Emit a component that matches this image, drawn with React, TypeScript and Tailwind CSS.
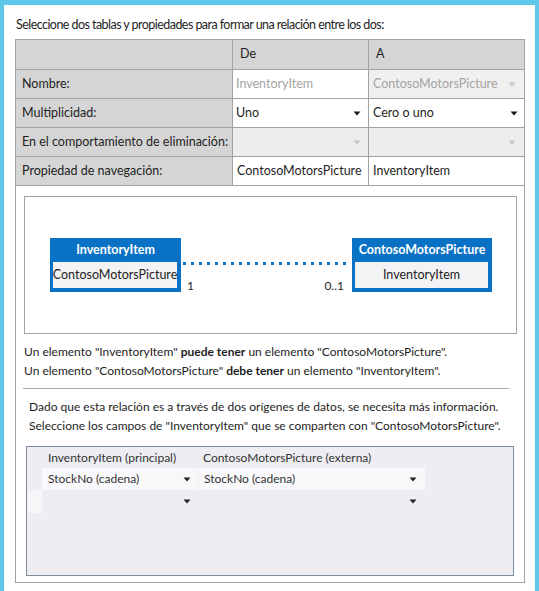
import React from "react";

const Arrow = ({ c = "#1a1a1a" }: { c?: string }) => (
  <svg width="8" height="5" viewBox="0 0 8 5" className="shrink-0">
    <path d="M0.5 0.5H7.5L4 4.5Z" fill={c} />
  </svg>
);

const Box = ({ title, field, w }: { title: string; field: string; w: string }) => (
  <div className={`${w} h-[54px] bg-[#0a72c4] flex flex-col shrink-0`}>
    <div className="h-[24px] flex items-center justify-center text-white font-bold leading-none text-[12.5px]">{title}</div>
    <div className="mx-[3px] mr-[4px] h-[26px] bg-[#f3f3f6] flex items-center justify-center text-[#222] leading-none text-[12.5px]">{field}</div>
  </div>
);

export default function App() {
  return (
    <div className="w-[539px] h-[591px] bg-[#5fc7ea] pt-[5px] px-[4px] font-['Lato',sans-serif] text-[12px] text-[#1e1e1e] overflow-hidden">
      <div className="h-full bg-white pl-[11px] pr-[10px] pt-[10px]">
        <div className="h-[24px] leading-[18px] pl-[1px] pt-[1px] text-[12.5px] tracking-[-0.55px]">
          Seleccione dos tablas y propiedades para formar una relación entre los dos:
        </div>
        <div className="border border-[#a3a3a3] h-[544px] flex flex-col">
          {/* table */}
          <div className="grid grid-cols-[217px_136px_1fr] text-[12.5px]">
            <div className="h-[30px] bg-[#d5d5d5] border-r border-b border-[#a3a3a3]" />
            <div className="h-[30px] bg-[#d5d5d5] border-r border-b border-[#a3a3a3] flex items-center pl-[7px]">De</div>
            <div className="h-[30px] bg-[#d5d5d5] border-b border-[#a3a3a3] flex items-center pl-[7px]">A</div>

            <div className="h-[29px] bg-[#d5d5d5] border-r border-b border-[#a3a3a3] flex items-center pl-[6px]">Nombre:</div>
            <div className="h-[29px] bg-white border-r border-b border-[#a3a3a3] flex items-center pl-[3px] text-[#a3a3a3]">InventoryItem</div>
            <div className="h-[29px] bg-[#f0f0f0] border-b border-[#a3a3a3] flex items-center justify-between pl-[4px] pr-[8px] text-[#a3a3a3]">
              <span>ContosoMotorsPicture</span>
              <Arrow c="#c4c4c4" />
            </div>

            <div className="h-[29px] bg-[#d5d5d5] border-r border-b border-[#a3a3a3] flex items-center pl-[6px]">Multiplicidad:</div>
            <div className="h-[29px] bg-white border-r border-b border-[#a3a3a3] flex items-center justify-between pl-[3px] pr-[7px]">
              <span>Uno</span>
              <Arrow />
            </div>
            <div className="h-[29px] bg-white border-b border-[#a3a3a3] flex items-center justify-between pl-[4px] pr-[6px]">
              <span>Cero o uno</span>
              <Arrow />
            </div>

            <div className="h-[29px] bg-[#d5d5d5] border-r border-b border-[#a3a3a3] flex items-center pl-[6px] whitespace-nowrap">En el comportamiento de eliminación:</div>
            <div className="h-[29px] bg-[#ededed] border-r border-b border-[#a3a3a3] flex items-center justify-end pr-[7px]">
              <Arrow c="#c4c4c4" />
            </div>
            <div className="h-[29px] bg-[#ededed] border-b border-[#a3a3a3] flex items-center justify-end pr-[8px]">
              <Arrow c="#c4c4c4" />
            </div>

            <div className="h-[29px] bg-[#d5d5d5] border-r border-b border-[#a3a3a3] flex items-center pl-[6px]">Propiedad de navegación:</div>
            <div className="h-[29px] bg-white border-r border-b border-[#a3a3a3] flex items-center pl-[4px]">ContosoMotorsPicture</div>
            <div className="h-[29px] bg-white border-b border-[#a3a3a3] flex items-center pl-[4px]">InventoryItem</div>
          </div>

          {/* diagram */}
          <div className="ml-[8px] mr-[7px] mt-[10px] h-[138px] border border-[#a3a3a3] pt-[41px] pl-[25px] pr-[24px] flex">
            <Box title="InventoryItem" field="ContosoMotorsPicture" w="w-[131px]" />
            <div className="relative flex-1 h-[54px]">
              <svg className="absolute left-0 top-[24px]" width="170" height="3">
                <line x1="2" y1="1.5" x2="170" y2="1.5" stroke="#0a72c4" strokeWidth="3" strokeDasharray="3 5" />
              </svg>
              <span className="absolute left-[6px] top-[40px] leading-[16px]">1</span>
              <span className="absolute right-[8px] top-[40px] leading-[16px]">0..1</span>
            </div>
            <Box title="ContosoMotorsPicture" field="InventoryItem" w="w-[140px]" />
          </div>

          {/* sentences */}
          <div className="ml-[8px] mt-[8px] leading-[19px]">
            <div>
              Un elemento "InventoryItem" <b className="font-bold">puede tener</b> un elemento "ContosoMotorsPicture".
            </div>
            <div>
              Un elemento "ContosoMotorsPicture" <b className="font-bold">debe tener</b> un elemento "InventoryItem".
            </div>
          </div>

          <div className="ml-[7px] w-[486px] h-px bg-[#a8a8a8] mt-[8px]" />

          <div className="ml-[13px] mt-[8px] leading-[19px] whitespace-nowrap">
            <div>Dado que esta relación es a través de dos orígenes de datos, se necesita más información.</div>
            <div>Seleccione los campos de "InventoryItem" que se comparten con "ContosoMotorsPicture".</div>
          </div>

          {/* grid */}
          <div className="ml-[10px] mt-[11px] w-[488px] h-[130px] border border-[#7d8c9c] bg-[#ededf2] text-[#333]">
            <div className="grid grid-cols-[15px_156px_229px_1fr]">
              <div className="h-[21px]" />
              <div className="h-[21px] flex items-center pl-[6px]">InventoryItem (principal)</div>
              <div className="h-[21px] flex items-center pl-[5px]">ContosoMotorsPicture (externa)</div>
              <div className="h-[21px]" />

              <div className="h-[22px]" />
              <div className="h-[22px] bg-[#f8f8fa] flex items-center justify-between pl-[6px] pr-[7px]">
                <span>StockNo (cadena)</span>
                <Arrow c="#222" />
              </div>
              <div className="h-[22px] bg-[#f8f8fa] flex items-center justify-between pl-[5px] pr-[8px] mr-[2px] ml-[1px]">
                <span>StockNo (cadena)</span>
                <Arrow c="#222" />
              </div>
              <div className="h-[22px]" />

              <div className="h-[23px] bg-[#f6f6f8] ml-[1px]" />
              <div className="h-[23px] flex items-center justify-end pr-[7px]">
                <Arrow c="#222" />
              </div>
              <div className="h-[23px] flex items-center justify-end pr-[10px]">
                <Arrow c="#222" />
              </div>
              <div className="h-[23px]" />
            </div>
          </div>
        </div>
      </div>
    </div>
  );
}
